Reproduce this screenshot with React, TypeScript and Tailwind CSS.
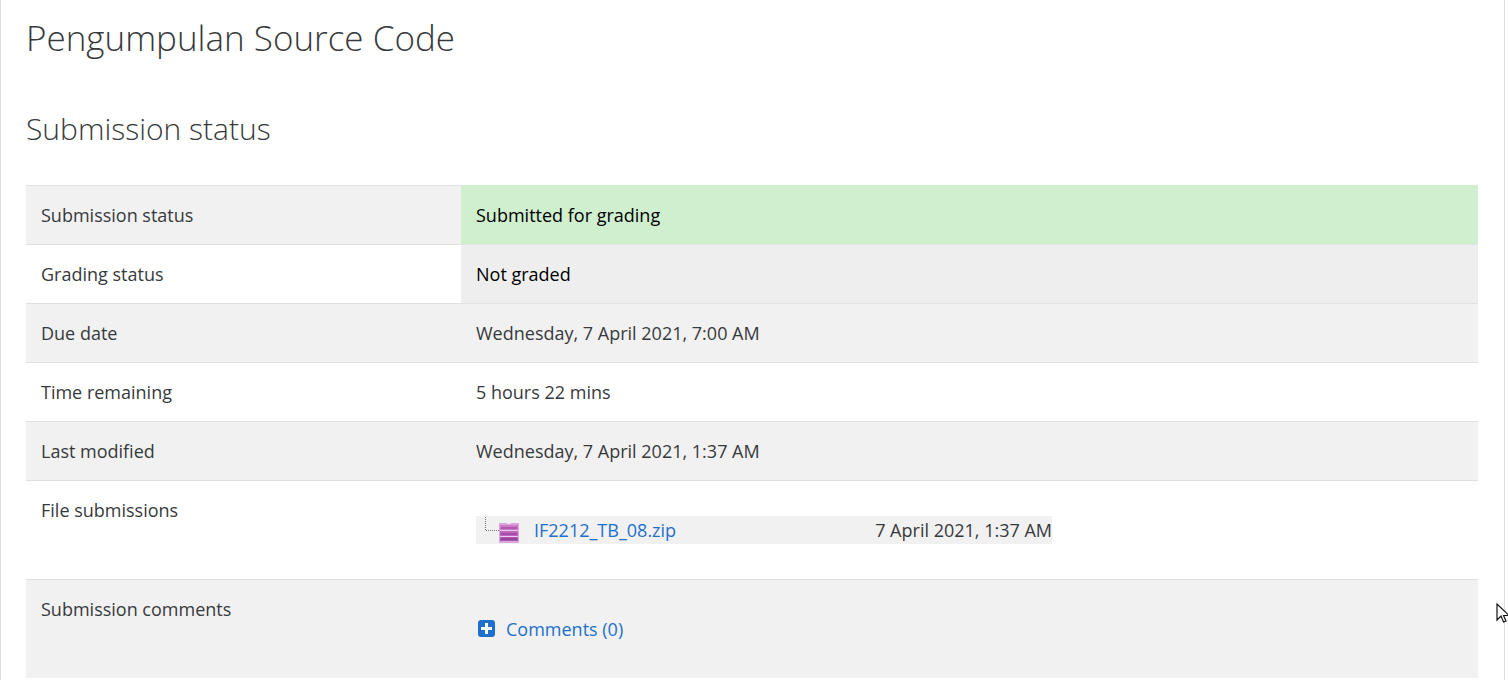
import type { ReactNode } from "react";

type Row = { label: string; value: ReactNode; tone?: string };

function ArchiveIcon() {
  return (
    <svg className="block" width="20" height="20" viewBox="0 0 20 20" aria-hidden="true">
      <rect width="20" height="20" fill="#dba6dc" />
      <rect x="1" y="2" width="18" height="5" fill="#cb7cc9" />
      <rect x="1" y="8" width="18" height="5" fill="#bd68bd" />
      <rect x="1" y="14" width="18" height="4" fill="#a958ae" />
      <path d="M2 4h16v2H2z" fill="#b757b5" />
      <path d="M2 10h16v2H2z" fill="#a64ba8" />
      <path d="M2 15h16v2H2z" fill="#97459d" />
      <path d="M1 7.500h18M1 13.500h18" stroke="#ebcaed" />
      <path d="M8 0h4v1H8z" fill="#f1e2f1" />
    </svg>
  );
}

function FileEntry() {
  return (
    <div className="my-5 flex w-[576px] max-w-full items-center bg-[#f1f1f1]">
      <svg width="23" height="28" viewBox="0 0 23 28" aria-hidden="true">
        <path d="M9.500 1v14M10 14.500h13" fill="none" stroke="#777" strokeDasharray="1 1" />
      </svg>
      <span className="mt-1.5 mr-[15px]">
        <ArchiveIcon />
      </span>
      <a href="#file" className="text-[#1f70cc]">IF2212_TB_08.zip</a>
      <span className="ml-auto">7 April 2021, 1:37 AM</span>
    </div>
  );
}

function CommentsLink() {
  return (
    <a href="#comments" className="my-5 flex w-fit items-center gap-[11px] text-[#1f70cc]">
      <svg width="19" height="18" viewBox="0 0 19 18" aria-hidden="true">
        <rect x="2" y="0" width="17" height="17" rx="3" fill="#1f70cc" />
        <path d="M10.500 3v11M5 8.500h11" stroke="#fff" strokeWidth="3" />
      </svg>
      Comments (0)
    </a>
  );
}

const rows: Row[] = [
  { label: "Submission status", value: "Submitted for grading", tone: "border-[#cfefcf] bg-[#cfefcf] text-black" },
  { label: "Grading status", value: "Not graded", tone: "border-[#dee2e6] bg-[#eeeeee] text-black" },
  { label: "Due date", value: "Wednesday, 7 April 2021, 7:00 AM" },
  { label: "Time remaining", value: "5 hours 22 mins" },
  { label: "Last modified", value: "Wednesday, 7 April 2021, 1:37 AM" },
  { label: "File submissions", value: <FileEntry /> },
  { label: "Submission comments", value: <CommentsLink /> },
];

export default function App() {
  return (
    <div className="relative overflow-hidden bg-white pr-[3px] font-['Open_Sans','Noto_Sans',sans-serif] text-[#373a3c]">
      <main className="min-h-screen border-x border-[#dddddd] pt-4 pr-[26px] pl-[25px]">
        <h1 className="text-[35px] leading-[44px] font-light">Pengumpulan Source Code</h1>
        <h2 className="mt-[49px] text-[30px] leading-10 font-light">Submission status</h2>
        <table className="mt-9 w-full table-fixed border-separate border-spacing-0 text-[18px] leading-7">
          <tbody>
            {rows.map((row) => (
              <tr key={row.label} className="odd:bg-[#f1f1f1]">
                <th scope="row" className="w-[435px] border-t border-[#dee2e6] px-[15px] py-[15px] text-left align-top font-normal">
                  {row.label}
                </th>
                <td className={`border-t px-[15px] py-[15px] align-top ${row.tone ?? "border-[#dee2e6]"}`}>
                  {row.value}
                </td>
              </tr>
            ))}
          </tbody>
        </table>
      </main>
      <svg className="absolute top-[603px] right-0" width="12" height="20" viewBox="0 0 12 20" aria-hidden="true">
        <path d="M1 1v16l4-4 2.500 6 2.500-1-2.500-5.500H13z" fill="#fff" stroke="#111" strokeWidth="1.200" />
      </svg>
    </div>
  );
}
